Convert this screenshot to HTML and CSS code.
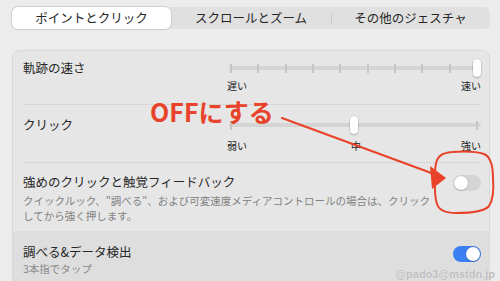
FILE: index.html
```html
<!DOCTYPE html>
<html lang="ja">
<head>
  <meta charset="UTF-8">
  <title>トラックパッド</title>
  <link rel="stylesheet" href="styles.css">
</head>
<body>
  <div class="page">
    <div class="tabs">
      <div class="tab selected">ポイントとクリック</div>
      <div class="tab">スクロールとズーム</div>
      <div class="tab sep">その他のジェスチャ</div>
    </div>

    <div class="card">
      <div class="row">
        <div class="title slider-title">軌跡の速さ</div>
        <div class="slider">
          <div class="track">
            <div class="ticks">
              <span class="tick"></span><span class="tick"></span><span class="tick"></span><span class="tick"></span><span class="tick"></span>
              <span class="tick"></span><span class="tick"></span><span class="tick"></span><span class="tick"></span><span class="tick"></span>
            </div>
            <div class="knob knob-end"></div>
          </div>
          <div class="scale">
            <span>遅い</span>
            <span>速い</span>
          </div>
        </div>
      </div>

      <div class="row row-click">
        <div class="title slider-title">クリック</div>
        <div class="slider">
          <div class="track">
            <div class="ticks">
              <span class="tick"></span><span class="tick"></span>
            </div>
            <div class="knob knob-mid"></div>
          </div>
          <div class="scale">
            <span>弱い</span>
            <span class="mid">中</span>
            <span>強い</span>
          </div>
        </div>
      </div>

      <div class="row row-toggle">
        <div class="text">
          <div class="title">強めのクリックと触覚フィードバック</div>
          <div class="desc">クイックルック、"調べる"、および可変速度メディアコントロールの場合は、クリックしてから強く押します。</div>
        </div>
        <div class="switch"><span class="dot"></span></div>
      </div>

      <div class="row-hover">
        <div class="text">
          <div class="title">調べる&amp;データ検出</div>
          <div class="sub">3本指でタップ</div>
        </div>
        <div class="switch on"><span class="dot"></span></div>
      </div>
    </div>
  </div>

  <!-- annotation drawn over the screenshot -->
  <div class="note">OFFにする</div>
  <svg class="marks" width="500" height="281" viewBox="0 0 500 281">
    <path d="M282 118 L434 174" stroke="#e8432a" stroke-width="2.2" fill="none" stroke-linecap="round"/>
    <path d="M446 178 L430 166 L432 189 Z" fill="#e8432a"/>
    <path d="M452 152 C466 151 478 152 484 154 C491 157 493 166 493 178 C494 190 493 200 489 206 C484 212 470 213 456 213 C446 213 439 210 437 204 C434 196 435 186 435 176 C435 165 436 157 443 154 C446 153 449 152 452 152 Z" stroke="#e8432a" stroke-width="2" fill="none"/>
  </svg>
  <div class="mark">@pado3@mstdn.jp</div>
</body>
</html>
```

FILE: styles.css
```css
body {
  margin: 0;
  background-color: #ececec;
  font-family: "Noto Sans CJK JP", "Noto Sans", sans-serif;
  color: #262626;
  overflow: hidden;
  height: 281px;
  position: relative;
}

.page {
  padding: 7px 10px 0 12px;
}

/* segmented tabs */
.tabs {
  display: grid;
  grid-template-columns: 159px 160px 159px;
  height: 22px;
  background-color: #e0e0e0;
  border-radius: 6px;
}

.tab {
  font-size: 12.5px;
  line-height: 22px;
  text-align: center;
  position: relative;
}

.tab.selected {
  background-color: #fff;
  border-radius: 6px;
  box-shadow: 0 0 0 1px #cfcfcf, 0 1px 1px rgba(0, 0, 0, 0.08);
}

.tab.sep::before {
  content: '';
  position: absolute;
  left: 0;
  top: 6px;
  height: 11px;
  width: 1px;
  background-color: #c9c9c9;
}

/* settings card */
.card {
  margin-top: 21px;
  background-color: #e6e6e6;
  border: 1px solid #d9d9d9;
  border-radius: 8px;
  height: 260px;
  overflow: hidden;
}

.row {
  display: flex;
  justify-content: space-between;
  margin: 0 8px 0 10px;
  padding: 7px 0 11px;
  border-bottom: 1px solid #d7d7d7;
}

.row-click {
  padding: 10px 0 9px;
}

.title {
  font-size: 12.5px;
  line-height: 18px;
}

.slider-title {
  line-height: 20px;
}

.slider {
  width: 254px;
}

.track {
  position: relative;
  height: 20px;
}

.track::before {
  content: '';
  position: absolute;
  left: 2px;
  right: 0;
  top: 8px;
  height: 4px;
  border-radius: 2px;
  background-color: #d4d4d4;
}

.ticks {
  position: absolute;
  left: 0;
  right: 0;
  top: 0;
  bottom: 0;
  padding: 0 3px;
  display: flex;
  justify-content: space-between;
  align-items: center;
}

.tick {
  width: 2px;
  height: 9px;
  background-color: #c6c6c6;
}

.knob {
  position: absolute;
  top: 1px;
  width: 8px;
  height: 18px;
  border-radius: 4px;
  background-color: #fff;
  box-shadow: 0 0 0 0.5px rgba(0, 0, 0, 0.15), 0 1px 2px rgba(0, 0, 0, 0.2);
}

.knob-end {
  right: 0;
}

.knob-mid {
  left: 123px;
}

.scale {
  display: flex;
  justify-content: space-between;
  font-size: 10px;
  line-height: 14px;
  margin-top: 1px;
  color: #222;
}

.row-click .scale {
  margin-top: 4px;
}

.scale .mid {
  margin-left: 4px;
}

.row-toggle {
  border-bottom: none;
  padding: 10px 0 8px;
}

.desc {
  width: 412px;
  margin-top: 2px;
  font-size: 10.5px;
  line-height: 15px;
  color: #828282;
}

.row-hover {
  display: flex;
  justify-content: space-between;
  padding: 12px 8px 10px 10px;
  background-color: #dedede;
}

.sub {
  font-size: 10.5px;
  line-height: 16px;
  color: #8a8a8a;
}

/* toggle switch */
.switch {
  width: 28px;
  height: 16px;
  border-radius: 8px;
  background-color: #d5d5d5;
  margin-top: 2px;
  position: relative;
  flex-shrink: 0;
}

.row-hover .switch {
  margin-top: 3px;
}

.switch .dot {
  position: absolute;
  left: 1px;
  top: 1px;
  width: 14px;
  height: 14px;
  border-radius: 50%;
  background-color: #fff;
  box-shadow: 0 0 1px rgba(0, 0, 0, 0.3), 0 1px 1px rgba(0, 0, 0, 0.15);
}

.switch.on {
  background-color: #3a7ff3;
}

.switch.on .dot {
  left: 13px;
}

/* annotation overlay */
.note {
  position: absolute;
  left: 150px;
  top: 101px;
  font-size: 25px;
  line-height: 20px;
  font-weight: bold;
  color: #e8432a;
}

.marks {
  position: absolute;
  left: 0;
  top: 0;
}

.mark {
  position: absolute;
  right: 5px;
  bottom: 0;
  font-family: "Liberation Sans", Arial, sans-serif;
  font-weight: bold;
  font-size: 11px;
  line-height: 13px;
  color: #bdbdbd;
  text-shadow: 0 0 1px #f6f6f6;
}
```
